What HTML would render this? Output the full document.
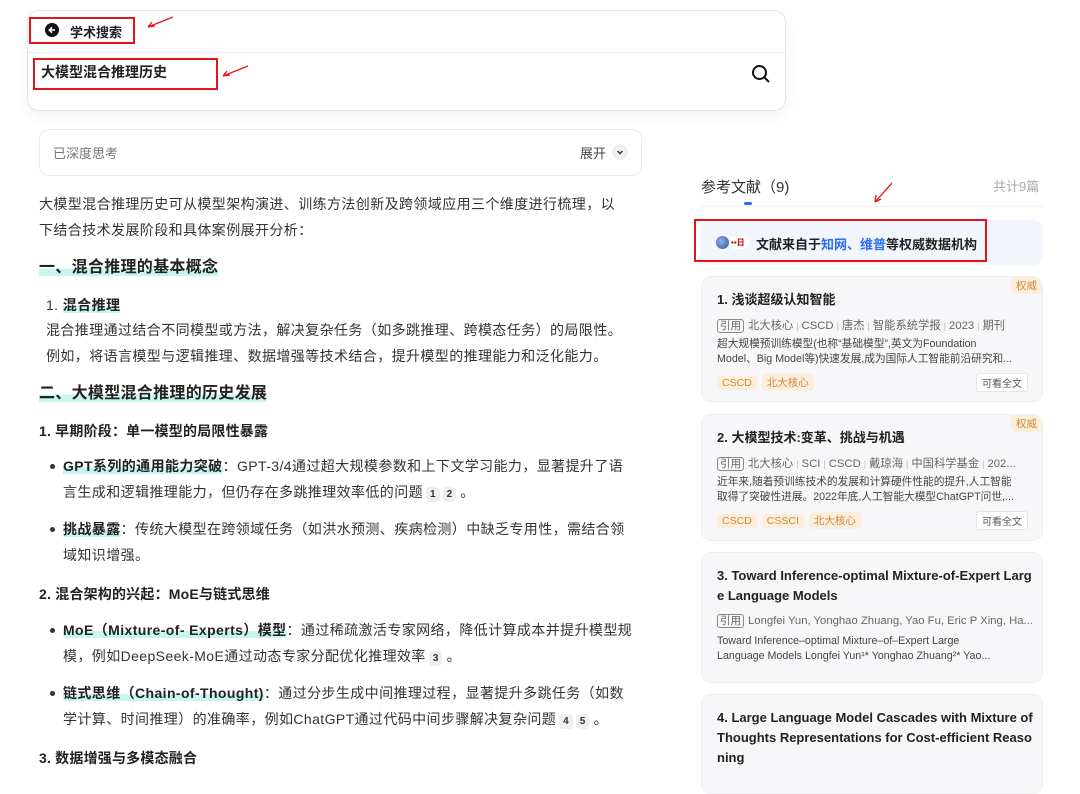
<!DOCTYPE html>
<html><head><meta charset="utf-8"><style>
*{margin:0;padding:0;box-sizing:border-box}
body{width:1080px;height:776px;overflow:hidden;background:#fff;font-family:"Liberation Sans","Noto Sans CJK SC",sans-serif;color:#222;position:relative}
.a{position:absolute;white-space:nowrap}
.top{left:27px;top:10px;width:759px;height:101px;border:1px solid #e6e6ea;border-radius:12px;box-shadow:0 6px 14px rgba(0,0,0,.05);background:#fff}
.red{position:absolute;border:2px solid #e8121b}
.hl{background:linear-gradient(transparent 55%,#c9f5f0 55%)}
.p{font-size:14px;color:#333;letter-spacing:0.4px}
.b{font-weight:bold;color:#222}
.dot{position:absolute;width:5px;height:5px;border-radius:50%;background:#333}
.ref{display:inline-block;background:#eceef2;border-radius:4px;font-size:10px;font-weight:bold;padding:0 4px;line-height:15px;margin-left:3px;color:#333;letter-spacing:0}
.card{position:absolute;left:701px;width:342px;background:#f7f7f9;border:1px solid #efeff2;border-radius:10px}
.ct{position:absolute;left:15px;font-size:13px;font-weight:bold;color:#222;line-height:20px;white-space:nowrap}
.meta{position:absolute;left:15px;font-size:11.3px;color:#666;white-space:nowrap}
.meta i{font-style:normal;color:#bbb;font-size:9px;margin:0 3px}
.meta .y{border:1px solid #888;border-radius:3px;padding:0 2px;font-size:10.5px;margin-right:4px}
.desc{position:absolute;left:15px;font-size:10.7px;color:#444;line-height:15px;width:320px}
.tag{display:inline-block;background:#fbeedd;color:#d08a30;font-size:10.5px;padding:1px 5px;border-radius:4px;margin-right:5px}
.full{position:absolute;right:14px;font-size:10px;color:#555;background:#fff;border:1px solid #e6e6e6;border-radius:3px;padding:1px 5px}
.qw{position:absolute;right:0;top:0;background:#fbeedd;color:#d08a30;font-size:10.5px;padding:1px 5px;border-radius:0 10px 0 6px}
</style></head><body>
<div class="a top"></div>
<div class="a" style="left:28px;top:52px;width:757px;height:1px;background:#eee"></div>
<div class="red" style="left:29px;top:17px;width:106px;height:27px"></div>
<div class="a" style="left:45px;top:23px;width:14px;height:14px;border-radius:50%;background:#111"></div>
<svg class="a" style="left:46px;top:24px" width="12" height="12" viewBox="0 0 12 12"><path d="M9 6H3.5M6 3.3L3.3 6 6 8.7" stroke="#fff" stroke-width="1.6" fill="none"/></svg>
<div class="a" style="left:70px;top:22px;font-size:13px;font-weight:bold">学术搜索</div>
<svg class="a" style="left:145px;top:15px" width="30" height="14"><path d="M28 2L3 12M3 12l7-1M3 12l4-5" stroke="#e8121b" stroke-width="1.3" fill="none"/></svg>
<div class="red" style="left:33px;top:58px;width:185px;height:32px"></div>
<div class="a" style="left:41px;top:62px;font-size:14px;font-weight:bold">大模型混合推理历史</div>
<svg class="a" style="left:220px;top:64px" width="30" height="14"><path d="M28 2L3 12M3 12l7-1M3 12l4-5" stroke="#e8121b" stroke-width="1.3" fill="none"/></svg>
<svg class="a" style="left:751px;top:64px" width="20" height="20"><circle cx="8.5" cy="8.5" r="6.5" stroke="#111" stroke-width="2" fill="none"/><path d="M13.5 13.5l4.5 4.5" stroke="#111" stroke-width="2"/></svg>

<div class="a" style="left:39px;top:129px;width:603px;height:47px;border:1px solid #ececef;border-radius:10px"></div>
<div class="a" style="left:53px;top:143px;font-size:13px;color:#777">已深度思考</div>
<div class="a" style="left:580px;top:143px;font-size:13px;color:#444">展开</div>
<div class="a" style="left:612px;top:144px;width:16px;height:16px;border-radius:50%;background:#f0f0f3"></div>
<svg class="a" style="left:612px;top:144px" width="16" height="16"><path d="M5.5 7l2.5 2.5 2.5-2.5" stroke="#333" stroke-width="1.4" fill="none"/></svg>

<div class="a p" style="left:39px;top:191px;line-height:26px">大模型混合推理历史可从模型架构演进、训练方法创新及跨领域应用三个维度进行梳理，以<br>下结合技术发展阶段和具体案例展开分析：</div>
<div class="a b" style="left:39px;top:257px;font-size:16px;line-height:22px;letter-spacing:0.3px"><span class="hl">一、混合推理的基本概念</span></div>
<div class="a p" style="left:46px;top:295px;line-height:20px">1. <span class="b hl">混合推理</span></div>
<div class="a p" style="left:46px;top:317px;line-height:26px">混合推理通过结合不同模型或方法，解决复杂任务（如多跳推理、跨模态任务）的局限性。<br>例如，将语言模型与逻辑推理、数据增强等技术结合，提升模型的推理能力和泛化能力。</div>
<div class="a b" style="left:39px;top:383px;font-size:16px;line-height:22px;letter-spacing:0.3px"><span class="hl">二、大模型混合推理的历史发展</span></div>
<div class="a b" style="left:39px;top:421px;font-size:14px;letter-spacing:0.2px">1. 早期阶段：单一模型的局限性暴露</div>

<div class="dot" style="left:50px;top:464px"></div>
<div class="a p" style="left:63px;top:453px;line-height:26px"><span class="b hl">GPT系列的通用能力突破</span>：GPT-3/4通过超大规模参数和上下文学习能力，显著提升了语<br>言生成和逻辑推理能力，但仍存在多跳推理效率低的问题<span class="ref">1</span><span class="ref">2</span> 。</div>
<div class="dot" style="left:50px;top:527px"></div>
<div class="a p" style="left:63px;top:516px;line-height:26px"><span class="b hl">挑战暴露</span>：传统大模型在跨领域任务（如洪水预测、疾病检测）中缺乏专用性，需结合领<br>域知识增强。</div>
<div class="a b" style="left:39px;top:584px;font-size:14px;letter-spacing:0.2px">2. 混合架构的兴起：MoE与链式思维</div>
<div class="dot" style="left:50px;top:628px"></div>
<div class="a p" style="left:63px;top:617px;line-height:26px"><span class="b hl">MoE（Mixture-of- Experts）模型</span>：通过稀疏激活专家网络，降低计算成本并提升模型规<br>模，例如DeepSeek-MoE通过动态专家分配优化推理效率<span class="ref">3</span> 。</div>
<div class="dot" style="left:50px;top:691px"></div>
<div class="a p" style="left:63px;top:680px;line-height:26px"><span class="b hl">链式思维（Chain-of-Thought)</span>：通过分步生成中间推理过程，显著提升多跳任务（如数<br>学计算、时间推理）的准确率，例如ChatGPT通过代码中间步骤解决复杂问题<span class="ref">4</span><span class="ref">5</span> 。</div>
<div class="a b" style="left:39px;top:748px;font-size:14px;letter-spacing:0.2px">3. 数据增强与多模态融合</div>

<div class="a" style="left:701px;top:176px;font-size:15px;color:#333">参考文献（9)</div>
<div class="a" style="left:993px;top:176px;font-size:13px;color:#aaa">共计9篇</div>
<div class="a" style="left:744px;top:202px;width:8px;height:3px;background:#2a6df4;border-radius:2px"></div>
<div class="a" style="left:701px;top:206px;width:342px;height:1px;background:#f0f0f0"></div>
<svg class="a" style="left:872px;top:181px" width="22" height="24"><path d="M20 2L3 21M3 21l1-7M3 21l6-3" stroke="#e8121b" stroke-width="1.3" fill="none"/></svg>
<div class="a" style="left:700px;top:220px;width:343px;height:45px;background:#f2f5fc;border-radius:10px"></div>
<div class="red" style="left:694px;top:219px;width:293px;height:43px"></div>
<div class="a" style="left:716px;top:236px;width:13px;height:13px;border-radius:50%;background:radial-gradient(circle at 40% 40%,#8fb0e8,#2a4f9a)"></div>
<div class="a" style="left:729px;top:236px;width:20px;height:13px;border-radius:6px;background:#fff"></div>
<div class="a" style="left:731px;top:237px;font-size:8px;color:#b00;font-weight:bold">▪▪日</div>
<div class="a" style="left:756px;top:234px;font-size:13px;font-weight:bold;color:#222">文献来自于<span style="color:#2a6df4">知网、维普</span>等权威数据机构</div>

<div class="card" style="top:276px;height:126px">
<div class="qw">权威</div>
<div class="ct" style="top:13px">1. 浅谈超级认知智能</div>
<div class="meta" style="top:40px"><span class="y">引用</span>北大核心<i>|</i>CSCD<i>|</i>唐杰<i>|</i>智能系统学报<i>|</i>2023<i>|</i>期刊</div>
<div class="desc" style="top:60px">超大规模预训练模型(也称“基础模型”,英文为Foundation<br>Model、Big Model等)快速发展,成为国际人工智能前沿研究和...</div>
<div class="a" style="left:15px;top:96px"><span class="tag">CSCD</span><span class="tag">北大核心</span></div>
<div class="full" style="top:96px">可看全文</div>
</div>
<div class="card" style="top:414px;height:127px">
<div class="qw">权威</div>
<div class="ct" style="top:13px">2. 大模型技术:变革、挑战与机遇</div>
<div class="meta" style="top:40px"><span class="y">引用</span>北大核心<i>|</i>SCI<i>|</i>CSCD<i>|</i>戴琼海<i>|</i>中国科学基金<i>|</i>202...</div>
<div class="desc" style="top:60px">近年来,随着预训练技术的发展和计算硬件性能的提升,人工智能<br>取得了突破性进展。2022年底,人工智能大模型ChatGPT问世,...</div>
<div class="a" style="left:15px;top:96px"><span class="tag">CSCD</span><span class="tag">CSSCI</span><span class="tag">北大核心</span></div>
<div class="full" style="top:96px">可看全文</div>
</div>
<div class="card" style="top:552px;height:131px">
<div class="ct" style="top:13px">3. Toward Inference-optimal Mixture-of-Expert Larg<br>e Language Models</div>
<div class="meta" style="top:60px"><span class="y">引用</span>Longfei Yun, Yonghao Zhuang, Yao Fu, Eric P Xing, Ha...</div>
<div class="desc" style="top:81px">Toward Inference–optimal Mixture–of–Expert Large<br>Language Models Longfei Yun¹* Yonghao Zhuang²* Yao...</div>
</div>
<div class="card" style="top:694px;height:100px">
<div class="ct" style="top:13px">4. Large Language Model Cascades with Mixture of<br>Thoughts Representations for Cost-efficient Reaso<br>ning</div>
</div>
</body></html>
